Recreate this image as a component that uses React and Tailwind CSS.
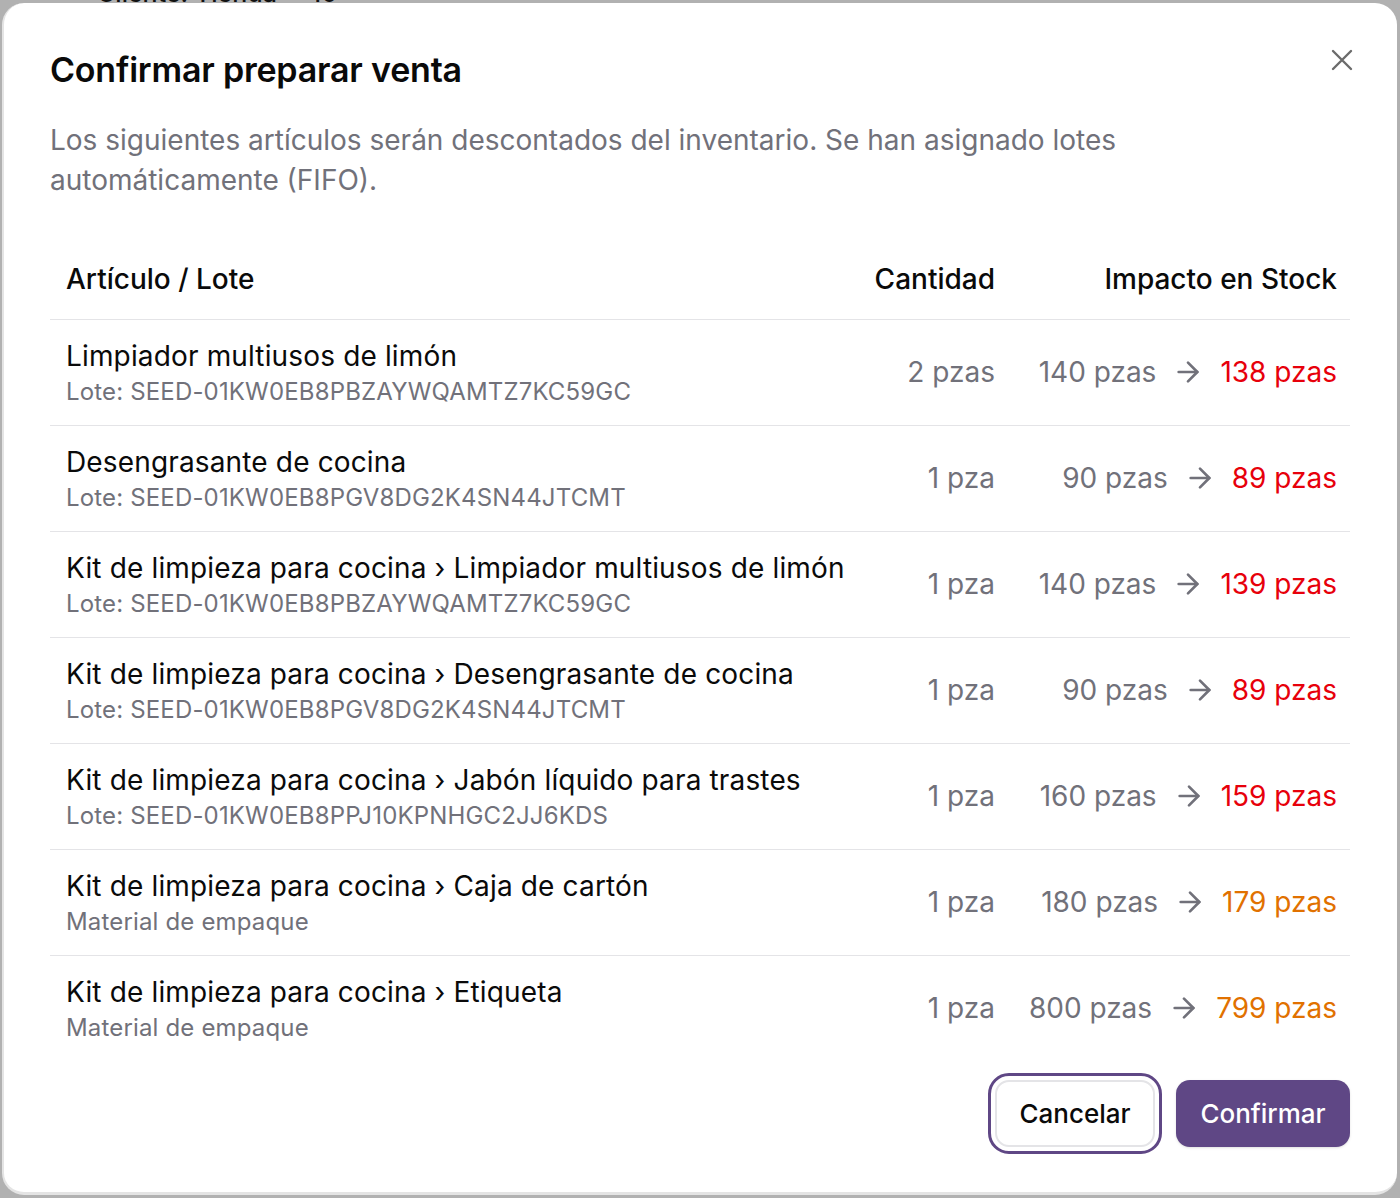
import { ArrowRight } from 'lucide-react';

const rows = [
  { name: 'Limpiador multiusos de limón', sub: 'Lote: SEED-01KW0EB8PBZAYWQAMTZ7KC59GC', qty: '2 pzas', from: '140 pzas', to: '138 pzas', low: true },
  { name: 'Desengrasante de cocina', sub: 'Lote: SEED-01KW0EB8PGV8DG2K4SN44JTCMT', qty: '1 pza', from: '90 pzas', to: '89 pzas', low: true },
  { name: 'Kit de limpieza para cocina › Limpiador multiusos de limón', sub: 'Lote: SEED-01KW0EB8PBZAYWQAMTZ7KC59GC', qty: '1 pza', from: '140 pzas', to: '139 pzas', low: true },
  { name: 'Kit de limpieza para cocina › Desengrasante de cocina', sub: 'Lote: SEED-01KW0EB8PGV8DG2K4SN44JTCMT', qty: '1 pza', from: '90 pzas', to: '89 pzas', low: true },
  { name: 'Kit de limpieza para cocina › Jabón líquido para trastes', sub: 'Lote: SEED-01KW0EB8PPJ10KPNHGC2JJ6KDS', qty: '1 pza', from: '160 pzas', to: '159 pzas', low: true },
  { name: 'Kit de limpieza para cocina › Caja de cartón', sub: 'Material de empaque', qty: '1 pza', from: '180 pzas', to: '179 pzas', low: false },
  { name: 'Kit de limpieza para cocina › Etiqueta', sub: 'Material de empaque', qty: '1 pza', from: '800 pzas', to: '799 pzas', low: false },
];

export default function App() {
  return (
    <div
      className="relative w-[1400px] h-[1198px] overflow-hidden bg-[#b1b1b1] pt-[3px] pl-[2px]"
      style={{ fontFamily: 'Inter, "Noto Sans", sans-serif' }}
    >
      {/* page behind the overlay, only its bottom edge peeks out */}
      <div className="absolute left-[97px] top-[-25px] flex gap-[34px] text-[25px] font-medium text-[#111]">
        <span>Cliente: Tienda</span>
        <span>10</span>
      </div>

      {/* Dialog */}
      <div className="relative w-[1395px] h-[1192px] bg-white rounded-[22px] border-l-2 border-b-[3px] border-[#e4e4e4] pl-[46px] pr-[47px] pt-[47px]">
        <button className="absolute right-[43px] top-[45px] text-[#6b6b6b]">
          <svg width="24" height="24" viewBox="0 0 24 24" fill="none" stroke="currentColor" strokeWidth="2.4" strokeLinecap="round">
            <path d="M3 3 21 21M21 3 3 21" />
          </svg>
        </button>

        <h2 className="text-[34px] leading-[40px] font-semibold text-[#0a0a0a] tracking-[-0.2px]">
          Confirmar preparar venta
        </h2>
        <p className="mt-[30px] max-w-[1200px] text-[28px] leading-[40px] text-[#71717a]">
          Los siguientes artículos serán descontados del inventario. Se han asignado lotes automáticamente (FIFO).
        </p>

        {/* Table */}
        <table className="mt-[39px] w-full border-collapse">
          <thead>
            <tr className="border-b border-[#e4e4e7]">
              <th className="w-full h-[80px] pl-4 pr-[13px] text-left text-[28px] font-medium text-[#0a0a0a]">Artículo / Lote</th>
              <th className="h-[80px] pl-4 pr-[13px] text-right text-[28px] font-medium text-[#0a0a0a] whitespace-nowrap">Cantidad</th>
              <th className="w-[342px] min-w-[342px] h-[80px] pl-4 pr-[13px] text-right text-[28px] font-medium text-[#0a0a0a] whitespace-nowrap">Impacto en Stock</th>
            </tr>
          </thead>
          <tbody>
            {rows.map((r, i) => (
              <tr key={i} className={i < rows.length - 1 ? 'border-b border-[#e4e4e7]' : ''}>
                <td className="pl-4 pr-[13px] pt-[18px] pb-[17px]">
                  <div className="text-[28px] leading-[36px] tracking-[0.15px] text-[#0a0a0a]">{r.name}</div>
                  <div className="mt-[2px] text-[24px] leading-[32px] tracking-[0.16px] text-[#71717a]">{r.sub}</div>
                </td>
                <td className="pl-4 pr-[13px] text-right text-[28px] text-[#71717a] whitespace-nowrap">{r.qty}</td>
                <td className="pl-4 pr-[13px]">
                  <div className="flex items-center justify-end gap-4 text-[28px] whitespace-nowrap">
                    <span className="text-[#71717a]">{r.from}</span>
                    <ArrowRight size={32} strokeWidth={2} className="text-[#71717a]" />
                    <span className={r.low ? 'text-[#e7000b]' : 'text-[#e17100]'}>{r.to}</span>
                  </div>
                </td>
              </tr>
            ))}
          </tbody>
        </table>

        {/* Footer */}
        <div className="mt-[19px] flex justify-end gap-[21px]">
          <button className="h-[67px] w-[160px] rounded-[14px] border-2 border-[#e4e4e7] bg-white text-[26px] font-medium text-[#0a0a0a] outline outline-[3px] outline-offset-[4px] outline-[#5f4785]">
            Cancelar
          </button>
          <button className="h-[67px] w-[174px] rounded-[14px] bg-[#5f4785] text-[26px] font-medium text-white shadow-sm">
            Confirmar
          </button>
        </div>
      </div>
    </div>
  );
}
